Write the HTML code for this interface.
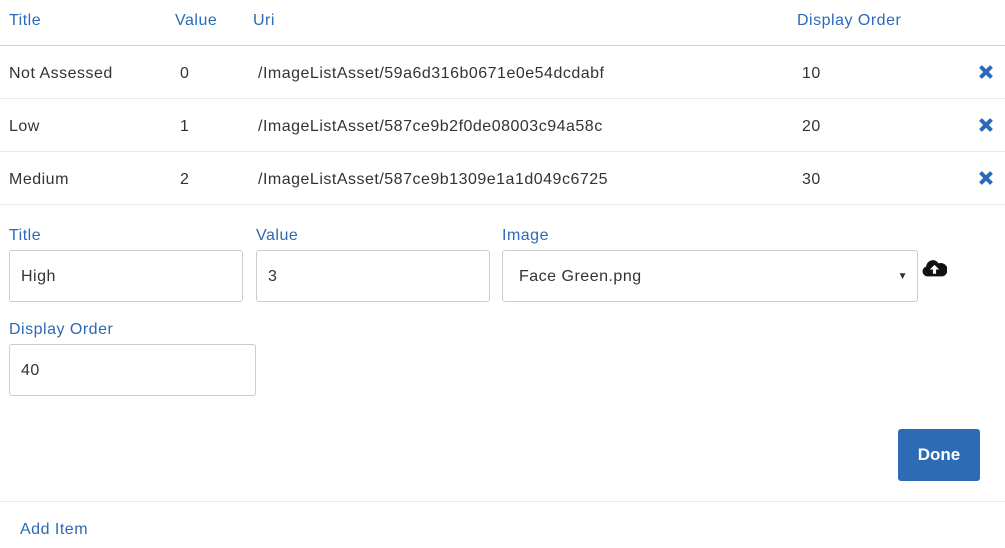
<!DOCTYPE html>
<html><head><style>
body{margin:0;width:1005px;height:548px;background:#fff;font-family:"Liberation Sans",sans-serif;font-size:16px;color:#333;position:relative;overflow:hidden;letter-spacing:0.5px}
.a{position:absolute;white-space:nowrap}
.h{color:#2a6ab8;font-size:16px}
.line{position:absolute;left:0;width:1005px;height:1px;background:#e8e8e8}
.inp{position:absolute;border:1px solid #ccc;border-radius:3px;box-sizing:border-box;height:52px;padding-left:11px;line-height:52px;font-size:16px;color:#333}
.x{position:absolute;left:977px;width:18px;height:18px}
</style></head><body>
<div class="a h" style="left:9px;top:12px">Title</div>
<div class="a h" style="left:175px;top:12px">Value</div>
<div class="a h" style="left:253px;top:12px">Uri</div>
<div class="a h" style="left:797px;top:12px">Display Order</div>
<div class="line" style="top:45px;background:#d0d0d0"></div>

<div class="a" style="left:9px;top:65px">Not Assessed</div>
<div class="a" style="left:180px;top:65px">0</div>
<div class="a" style="left:258px;top:65px">/ImageListAsset/59a6d316b0671e0e54dcdabf</div>
<div class="a" style="left:802px;top:65px">10</div>
<div class="line" style="top:98px"></div>

<div class="a" style="left:9px;top:118px">Low</div>
<div class="a" style="left:180px;top:118px">1</div>
<div class="a" style="left:258px;top:118px">/ImageListAsset/587ce9b2f0de08003c94a58c</div>
<div class="a" style="left:802px;top:118px">20</div>
<div class="line" style="top:151px"></div>

<div class="a" style="left:9px;top:171px">Medium</div>
<div class="a" style="left:180px;top:171px">2</div>
<div class="a" style="left:258px;top:171px">/ImageListAsset/587ce9b1309e1a1d049c6725</div>
<div class="a" style="left:802px;top:171px">30</div>
<div class="line" style="top:204px"></div>

<svg class="x" style="top:63px" viewBox="0 0 18 18"><path d="M3.5 3.5L14.5 14.5M14.5 3.5L3.5 14.5" stroke="#2a6ab8" stroke-width="4"/></svg>
<svg class="x" style="top:116px" viewBox="0 0 18 18"><path d="M3.5 3.5L14.5 14.5M14.5 3.5L3.5 14.5" stroke="#2a6ab8" stroke-width="4"/></svg>
<svg class="x" style="top:169px" viewBox="0 0 18 18"><path d="M3.5 3.5L14.5 14.5M14.5 3.5L3.5 14.5" stroke="#2a6ab8" stroke-width="4"/></svg>

<div class="a h" style="left:9px;top:227px">Title</div>
<div class="a h" style="left:256px;top:227px">Value</div>
<div class="a h" style="left:502px;top:227px">Image</div>
<div class="inp" style="left:9px;top:250px;width:234px">High</div>
<div class="inp" style="left:256px;top:250px;width:234px">3</div>
<div class="inp" style="left:502px;top:250px;width:416px;padding-left:16px">Face Green.png<span style="position:absolute;right:9px;top:0;font-size:10px">▼</span></div>
<svg style="position:absolute;left:922px;top:257px" width="25" height="22" viewBox="0 0 24 20"><path d="M5 18a4.8 4.8 0 0 1-1-9.4A6.5 6.5 0 0 1 16 5.5 4.8 4.8 0 0 1 20 18z" fill="#111"/><path d="M12 7l-4.5 4.5h3v4h3v-4h3z" fill="#fff"/></svg>

<div class="a h" style="left:9px;top:321px">Display Order</div>
<div class="inp" style="left:9px;top:344px;width:247px">40</div>

<div style="position:absolute;left:898px;top:429px;width:82px;height:52px;background:#2d6bb5;border-radius:3px;color:#fff;font-size:17px;font-weight:bold;line-height:52px;text-align:center;letter-spacing:0">Done</div>
<div class="line" style="top:501px"></div>
<div class="a h" style="left:20px;top:521px">Add Item</div>
</body></html>
